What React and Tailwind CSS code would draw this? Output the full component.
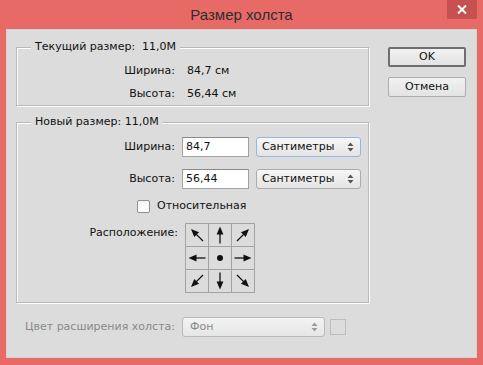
import React from 'react';

const ARROWS = [315, 0, 45, 270, null, 90, 225, 180, 135];

function Arrow({ angle }) {
  if (angle === null) {
    return (
      <svg width="22" height="22" viewBox="0 0 22 22">
        <circle cx="11" cy="11" r="3" fill="#111" />
      </svg>
    );
  }
  return (
    <svg width="22" height="22" viewBox="0 0 22 22">
      <g transform={`rotate(${angle} 11 11)`}>
        <line x1="11" y1="19.5" x2="11" y2="8" stroke="#111" strokeWidth="1.3" />
        <polygon points="11,2.5 7.6,10.5 14.4,10.5" fill="#111" />
      </g>
    </svg>
  );
}

function UpDown({ color = '#555' }) {
  return (
    <svg width="7" height="10" viewBox="0 0 7 10">
      <polygon points="3.5,0.5 6.5,4 0.5,4" fill={color} />
      <polygon points="3.5,9.5 6.5,6 0.5,6" fill={color} />
    </svg>
  );
}

function Select({ label, focused }) {
  return (
    <div
      className={`h-[20px] w-[105px] rounded-[3px] border bg-gradient-to-b from-[#f6f6f6] to-[#e4e4e4] flex items-center justify-between pl-[5px] pr-[6px] ${
        focused ? 'border-[#8fb8e0]' : 'border-[#acacac]'
      }`}
    >
      <span>{label}</span>
      <UpDown />
    </div>
  );
}

function TextBox({ value }) {
  return (
    <div className="h-[20px] w-[67px] bg-white border border-[#a3a3a3] border-t-[#8a8a8a] flex items-center pl-[3px]">
      {value}
    </div>
  );
}

function Group({ title, className, children }) {
  return (
    <div
      className={`relative border border-[#b8b8b8] shadow-[inset_1px_1px_0_#fff,1px_1px_0_#fff] ${className}`}
    >
      <span className="absolute -top-[8px] left-[14px] bg-[#dcdcdc] px-[4px] leading-[14px] whitespace-pre">
        {title}
      </span>
      {children}
    </div>
  );
}

export default function App() {
  return (
    <div className="w-[483px] h-[365px] bg-[#e76a66] px-[6px] flex flex-col font-['DejaVu_Sans',sans-serif] text-[11px] text-[#111]">
      <div className="h-[29px] grid grid-cols-[30px_1fr_30px] items-start">
        <div />
        <div className="text-center pt-[4px] text-[15px] text-[#2e2e2e] font-['Liberation_Sans',sans-serif]">
          Размер холста
        </div>
        <div className="h-[19px] w-[30px] bg-[#c75050] flex items-center justify-center">
          <svg width="10" height="9" viewBox="0 0 10 9">
            <path d="M1 0.5 L9 8.5 M9 0.5 L1 8.5" stroke="#fff" strokeWidth="2" />
          </svg>
        </div>
      </div>

      <div className="h-[329px] bg-[#dcdcdc] border border-[#d3d3d3] pl-[9px] pt-[17px] flex">
        <div className="w-[353px] flex flex-col">
          <Group title="Текущий размер:  11,0M" className="h-[59px] pt-[11px]">
            <div className="grid grid-cols-[158px_auto] gap-x-[12px] leading-[23px]">
              <span className="text-right">Ширина:</span>
              <span>84,7 см</span>
              <span className="text-right">Высота:</span>
              <span>56,44 см</span>
            </div>
          </Group>

          <Group title="Новый размер: 11,0M" className="mt-[16px] h-[181px] pt-[14px]">
            <div className="grid grid-cols-[158px_67px_105px] gap-x-[7px] gap-y-[12px] items-center">
              <span className="text-right">Ширина:</span>
              <TextBox value="84,7" />
              <Select label="Сантиметры" focused />
              <span className="text-right">Высота:</span>
              <TextBox value="56,44" />
              <Select label="Сантиметры" />
            </div>
            <div className="mt-[11px] ml-[120px] flex items-center gap-[7px] h-[13px]">
              <div className="w-[13px] h-[13px] bg-gradient-to-b from-[#f4f4f4] to-white border border-[#8f8f8f] rounded-[2px]" />
              <span>Относительная</span>
            </div>
            <div className="mt-[10px] flex items-start">
              <span className="w-[161px] text-right pt-[2px]">Расположение:</span>
              <div className="ml-[7px] grid grid-cols-[22px_22px_22px] gap-px p-px bg-[#a3a3a3]">
                {ARROWS.map((a, i) => (
                  <div key={i} className="w-[22px] h-[22px] bg-[#dcdcdc]">
                    <Arrow angle={a} />
                  </div>
                ))}
              </div>
            </div>
          </Group>

          <div className="mt-[14px] flex items-center text-[#8a8a8a]">
            <span className="w-[159px] text-right">Цвет расширения холста:</span>
            <div className="ml-[7px] h-[20px] w-[143px] rounded-[3px] border border-[#b9b9b9] bg-gradient-to-b from-[#f3f3f3] to-[#e6e6e6] flex items-center justify-between pl-[7px] pr-[6px]">
              <span>Фон</span>
              <UpDown color="#9a9a9a" />
            </div>
            <div className="ml-[5px] w-[16px] h-[16px] border border-[#bdbdbd]" />
          </div>
        </div>

        <div className="ml-[19px] w-[78px] flex flex-col">
          <button className="h-[20px] w-[78px] rounded-[2px] border-2 border-[#6f6f6f] bg-gradient-to-b from-[#f2f2f2] to-[#e3e3e3] text-[#111]">
            OK
          </button>
          <button className="mt-[10px] h-[20px] w-[78px] rounded-[2px] border border-[#acacac] bg-gradient-to-b from-[#f2f2f2] to-[#e3e3e3] text-[#111]">
            Отмена
          </button>
        </div>
      </div>
    </div>
  );
}
